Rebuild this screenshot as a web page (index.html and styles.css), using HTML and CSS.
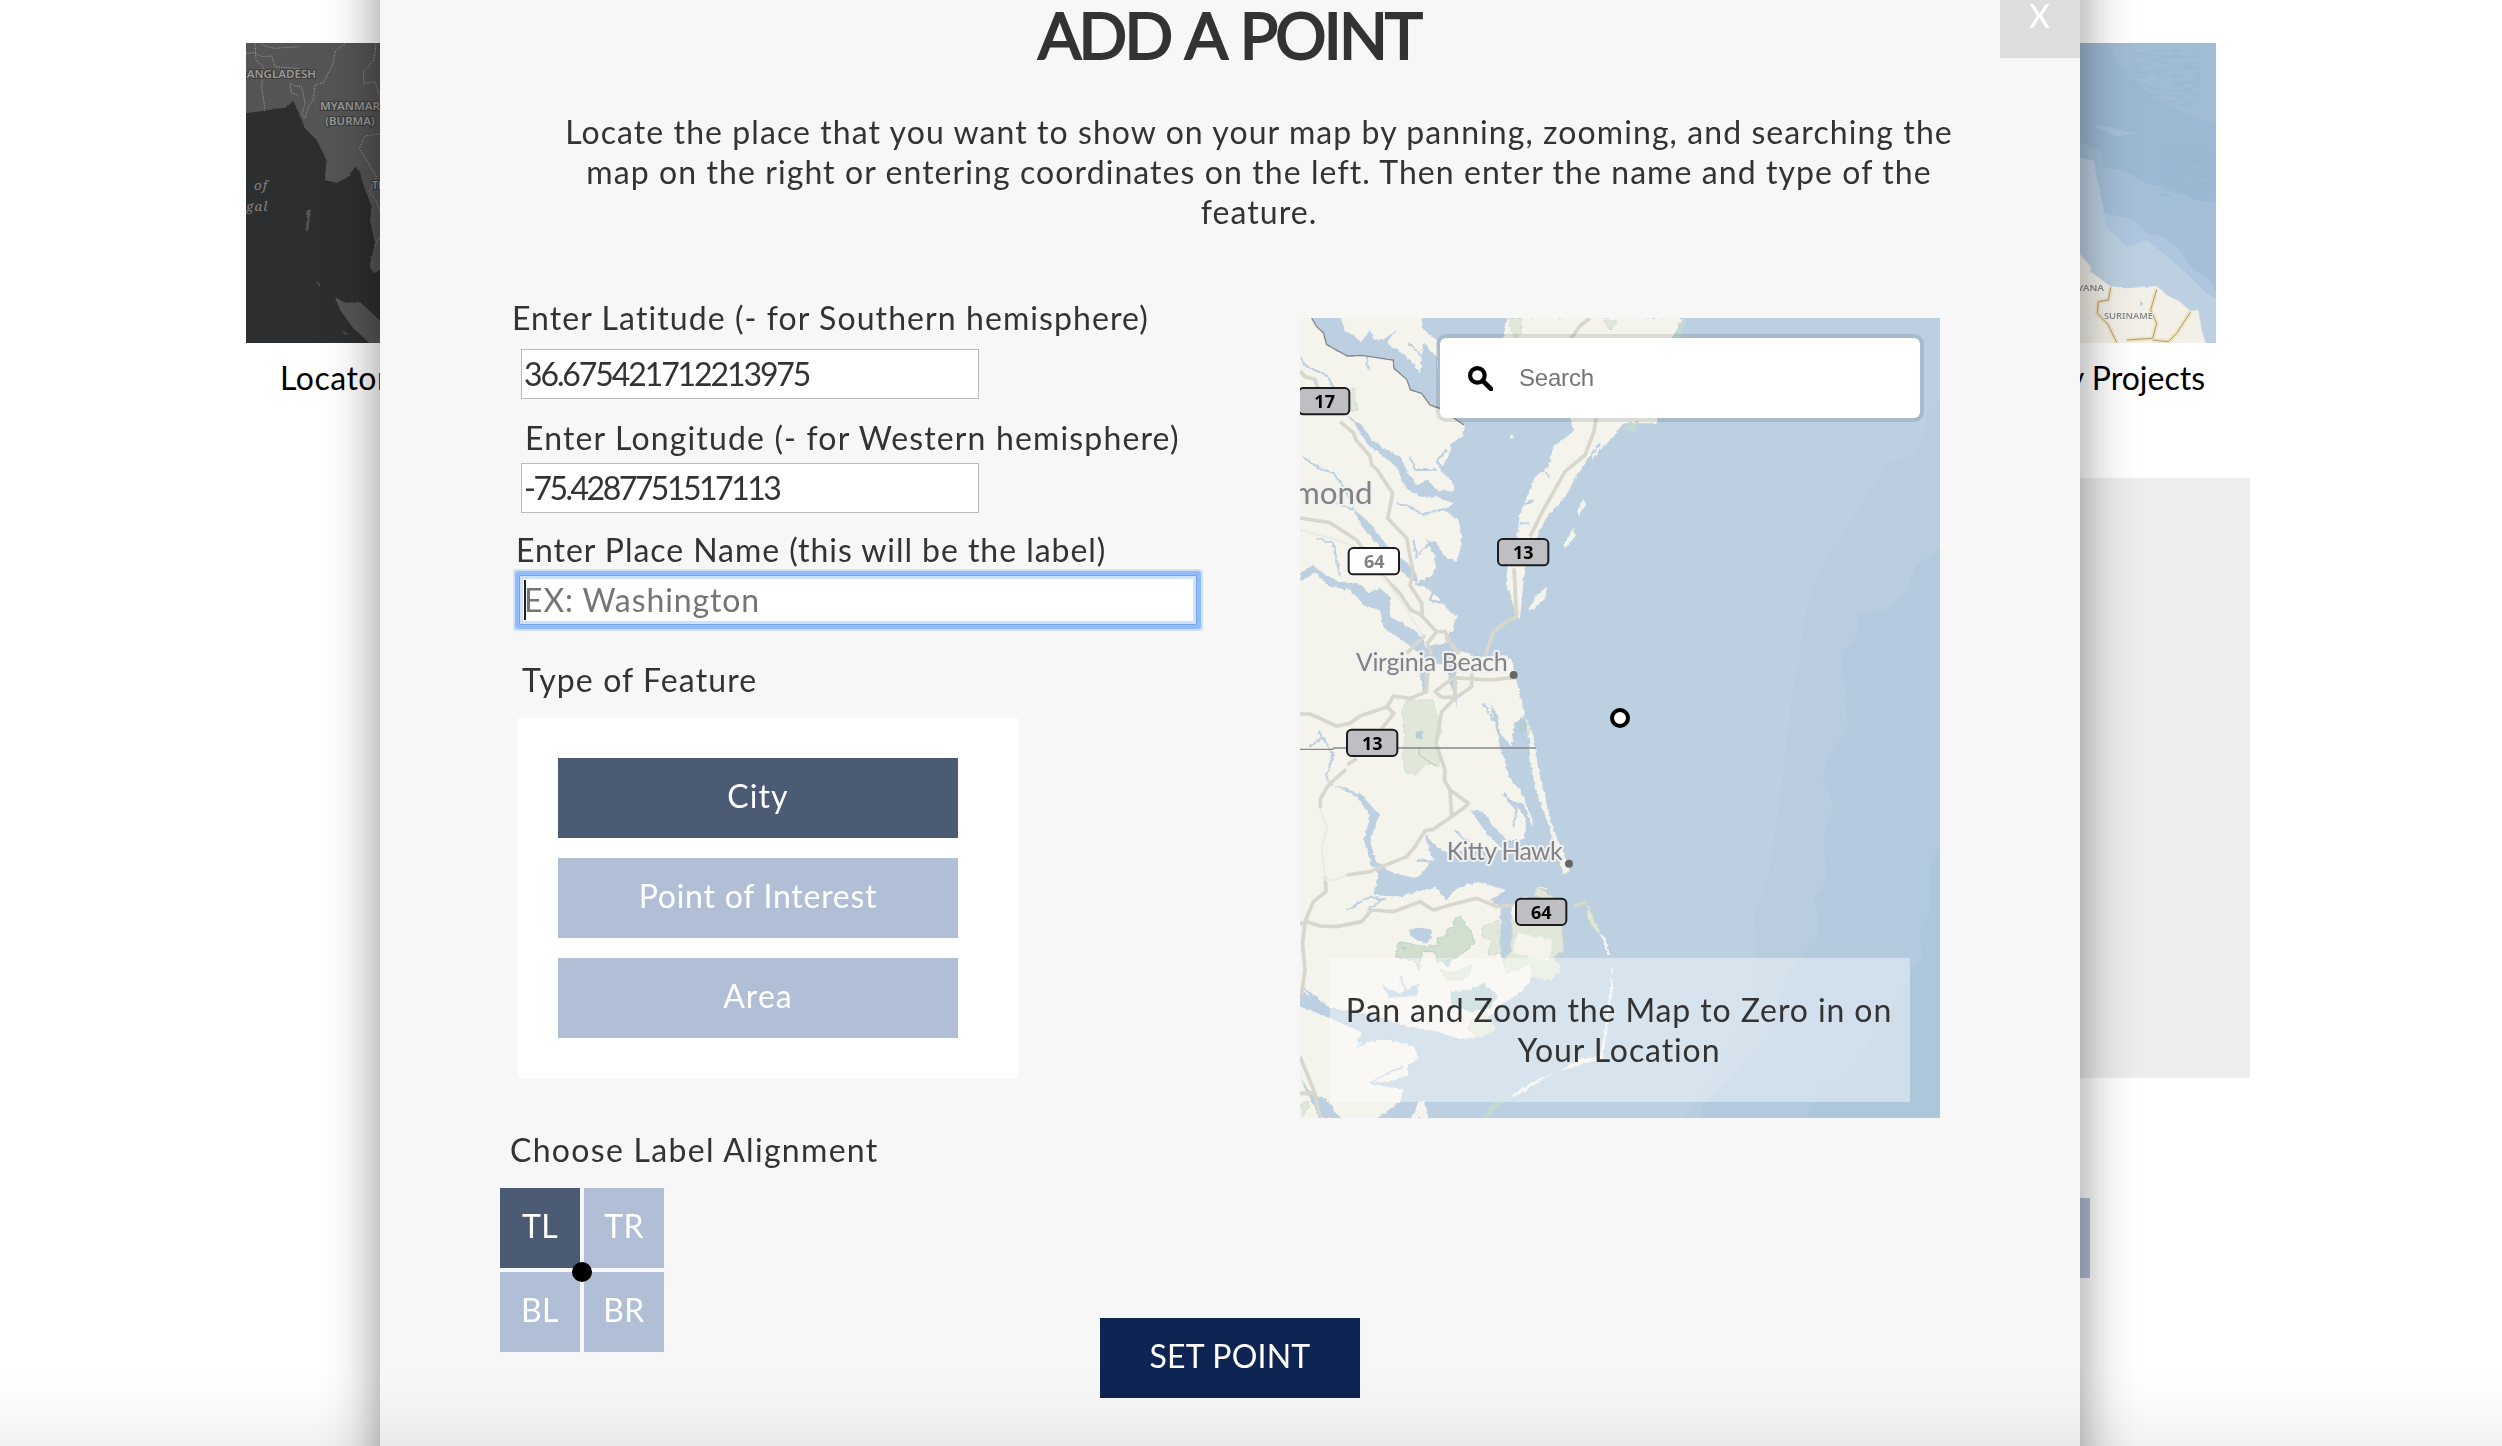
FILE: index.html
```html
<!DOCTYPE html>
<html lang="en">
<head>
<meta charset="utf-8">
<title>Add a Point</title>
<link rel="stylesheet" href="styles.css">
</head>
<body>
<div class="page">
  <div class="gallery">
    <figure class="card">
      <svg class="thumb" viewBox="78 129 1200 900">
        <rect x="78" y="129" width="1200" height="900" fill="#2d2e30"/>
        <g filter="url(#rough)" fill="#555">
          <path d="M60 100H600V960L480 810L462 820L448 800L465 730L450 660L455 620L432 560L420 515L405 500L385 530L350 548L314 540L320 480L290 420L255 385L235 335L220 302L200 322L78 340Z"/>
          <path d="M345 892L375 908L420 906L500 980V1040H460L400 985L360 930Z"/>
          <path d="M262 630L272 628L265 690L258 695ZM362 990L390 1005L375 1003ZM290 842L302 855L296 858Z"/>
        </g>
        <g fill="none" stroke="#a3a3a3" stroke-width="3" stroke-dasharray="3 4">
          <path d="M78 160L105 158L125 170L155 168L165 200L240 206M130 135L160 145L240 140M105 130L108 180L130 200L125 260L136 335"/>
          <path d="M375 130L345 155L340 190L310 248L285 255L280 300L265 320L255 355L246 345L255 310L245 260L225 258L210 250L215 280L232 285"/>
          <path d="M468 130L462 180L430 215L432 250L465 245L478 285M478 402L435 408L418 445L445 490L470 530L448 575L470 605L482 640M480 712L462 740"/>
        </g>
        <g class="dark-names">
          <text x="80" y="234" textLength="208" lengthAdjust="spacingAndGlyphs">ANGLADESH</text>
          <text x="300" y="330" textLength="180" lengthAdjust="spacingAndGlyphs">MYANMAR</text>
          <text x="316" y="376" textLength="148" lengthAdjust="spacingAndGlyphs">(BURMA)</text>
          <text x="456" y="566">THAI</text>
        </g>
        <g class="dark-sea"><text x="102" y="571">of</text><text x="78" y="632">gal</text></g>
      </svg>
      <figcaption class="caption caption-left">Locator</figcaption>
    </figure>
    <figure class="card">
      <svg class="thumb" viewBox="-432 129 1200 900">
        <defs>
          <filter id="rough" x="-5%" y="-5%" width="110%" height="110%">
            <feTurbulence type="fractalNoise" baseFrequency=".09" numOctaves="3" seed="4"/>
            <feDisplacementMap in="SourceGraphic" scale="7"/>
          </filter>
          <filter id="streaks" x="0" y="0" width="100%" height="100%" color-interpolation-filters="sRGB">
            <feTurbulence type="fractalNoise" baseFrequency=".03 .09" numOctaves="3" seed="8"/>
            <feColorMatrix values="0 0 0 0 .59  0 0 0 0 .71  0 0 0 0 .82  12 0 0 0 -6"/>
          </filter>
        </defs>
        <rect x="-432" y="129" width="1200" height="900" fill="#9cb9d3"/>
        <g filter="url(#rough)">
          <path d="M440 120H790V380L700 350L600 300L540 260L480 200Z" fill="#a3bdd6" opacity=".8"/>
          <path d="M340 420L420 450L430 500L500 515L560 550L650 570L700 600L790 610V1040H300Z" fill="#a5bfd8"/>
          <path d="M340 600L440 640L520 660L560 700L610 710L660 750L700 810L740 830L790 900V1040H300Z" fill="#afc7de"/>
          <path d="M340 470L400 480L425 600L440 680L500 740L560 720L610 760L680 820L740 880L790 910V1040H300Z" fill="#bcd0e1"/>
          <path d="M385 372L440 380L525 400L470 410Z" fill="#a7c1d9"/>
          <path d="M-440 600L340 745L365 768L392 800V815L450 858L500 865L590 858L620 885L660 905L690 932L715 930L725 990L738 1035H-440Z" fill="#f2f0e9"/>
        </g>
        <rect x="520" y="150" width="200" height="170" filter="url(#streaks)" opacity=".45"/>
        <rect x="600" y="440" width="160" height="150" filter="url(#streaks)" opacity=".45"/>
        <g fill="none" stroke="#f3e3bb" stroke-width="14"><path d="M452 862L445 900L415 905L412 940L445 975L470 1028M590 868L572 930L590 970L578 1015L500 1020M692 935L650 1000L625 1025L578 1020"/></g>
        <g fill="none" stroke="#a09c90" stroke-width="3"><path d="M452 862L445 900L415 905L412 940L445 975L470 1028M590 868L572 930L590 970L578 1015L500 1020M692 935L650 1000L625 1025L578 1020"/></g>
        <path d="M541 902L550 911L541 920Z" fill="#afcbe3"/>
        <g class="light-names"><text x="330" y="873" textLength="102" lengthAdjust="spacingAndGlyphs">UYANA</text><text x="432" y="958" textLength="147" lengthAdjust="spacingAndGlyphs">SURINAME</text></g>
      </svg>
      <figcaption class="caption caption-right">My Projects</figcaption>
    </figure>
  </div>
  <div class="preview"></div>
  <button class="next"></button>
</div>

<main class="modal">
  <button class="close">X</button>
  <h1 class="title">ADD A POINT</h1>
  <p class="intro">Locate the place that you want to show on your map by panning, zooming, and searching the<br>map on the right or entering coordinates on the left. Then enter the name and type of the<br>feature.</p>
  <div class="columns">
    <form class="fields">
      <label class="label lat-label">Enter Latitude (- for Southern hemisphere)</label>
      <input class="coord lat" value="36.675421712213975">
      <label class="label lon-label">Enter Longitude (- for Western hemisphere)</label>
      <input class="coord lon" value="-75.4287751517113">
      <label class="label name-label">Enter Place Name (this will be the label)</label>
      <div class="name-wrap"><input class="name" placeholder="EX: Washington"><i class="caret"></i></div>
      <label class="label type-label">Type of Feature</label>
      <div class="types">
        <div class="choice selected">City</div>
        <div class="choice poi">Point of Interest</div>
        <div class="choice">Area</div>
      </div>
      <label class="label align-label">Choose Label Alignment</label>
      <div class="align">
        <div class="choice selected">TL</div>
        <div class="choice">TR</div>
        <div class="choice">BL</div>
        <div class="choice">BR</div>
        <i class="dot"></i>
      </div>
    </form>
    <div class="map">
      <svg class="map-art" viewBox="30 24 1920 2400">
        <defs>
          <filter id="coast" x="-2%" y="-2%" width="104%" height="104%">
            <feTurbulence type="fractalNoise" baseFrequency=".07" numOctaves="4" seed="11"/>
            <feDisplacementMap in="SourceGraphic" scale="12" xChannelSelector="R" yChannelSelector="G"/>
          </filter>
        </defs>
        <rect x="30" y="24" width="1920" height="2400" fill="#bcd0e1"/>
        <path fill="#b9cddf" d="M1950 262L1915 310L1895 400L1870 432L1795 462L1690 620L1610 745L1550 880L1530 1030L1502 1190L1465 1500L1432 1715L1393 1800L1400 2050L1260 2310L1180 2424H1950Z"/>
        <path fill="#b2c9de" d="M1950 712L1875 772L1850 848L1795 897L1710 912L1698 980L1680 1010L1658 1022V1060L1674 1250L1610 1355L1598 1415L1625 1465V1505L1602 1575L1608 1715L1572 1762L1587 1815L1585 1880L1530 1945L1490 2000L1430 2180L1280 2345L1238 2392L1230 2424H1950Z"/>
        <path fill="#acc7da" d="M1950 1602L1920 1670V1810L1890 1865L1895 1945L1830 2040L1730 2210L1680 2300L1620 2313L1595 2330L1547 2424H1950Z"/>
        <g filter="url(#coast)">
          <g fill="#f4f3ec">
            <!-- western shore down to the Outer Banks -->
            <path d="M0 0H390L400 60L440 90L450 280L522 345L515 380L485 400L475 440L450 480L490 520V580L465 600L505 630L514 665V705L500 755L465 740L440 700L405 685L432 730L440 770L420 800L385 815L440 860L465 890L500 920L490 960L465 975L505 1020L560 1040L640 1035L665 1050L676 1100L690 1150L705 1220L730 1275L742 1360L762 1450L785 1540L815 1620L842 1680L820 1692L808 1650L775 1570L735 1520L715 1600L790 1660L810 1690L770 1740L740 1730L690 1745L815 1840L822 1925L785 1925L812 1980L780 2012L728 2000L700 2040L640 2080L600 2120L570 2180L500 2190L440 2165L340 2160L200 2110L120 2100L60 2060L0 2020Z"/>
            <path d="M0 2080L60 2100L120 2125L215 2165L200 2200L290 2190L372 2205L385 2245L350 2270L355 2295L300 2315L235 2320L340 2340L330 2375L255 2430H0ZM385 2375L405 2372L415 2424H365Z"/>
            <!-- Delmarva -->
            <path d="M500 24H1180L1145 84L1100 340L1000 340L950 390L900 440L870 490L840 540L800 590L755 650L715 740L702 800L690 925H678L668 870L648 820L652 770L680 690L690 610L715 550L735 500L775 470L790 410L850 365L840 320L560 90Z"/>
            <path d="M930 340L995 345L970 380L930 420L905 450ZM880 570L888 585L865 620L862 600ZM850 655L855 680L825 715L820 705ZM770 830L765 870L715 905L735 860ZM810 745L795 765ZM660 370L672 378L662 392Z"/>
          </g>
          <g fill="#bcd0e1">
            <path d="M65 20H150L165 60L215 95L240 60L250 90L285 85L320 60L290 100L330 125L360 150L390 190L400 100L440 140L455 300L420 285L395 250L362 240L350 208L312 175L310 150L215 136L172 138L110 104L100 68L80 50Z"/>
            <path d="M430 20H650L640 90H560L450 90Z"/>
            <path d="M170 312L215 345L245 390L300 425L330 440L355 490L380 525L415 510L440 540L500 545V585L440 560L390 560L345 530L320 470L275 435L235 405L205 360Z"/>
            <path d="M190 595L240 640L290 705L370 775L385 820L350 800L270 710L215 650Z"/>
            <path d="M30 790L70 765L110 795L145 815L215 825L235 850L270 835L300 860L300 920L380 965L410 1010L470 1000L465 980L505 1020L500 1080L450 1065L410 1050L350 1000L280 950L270 900L220 885L180 840L120 830L75 790L30 815Z"/>
            <path d="M385 1060L420 1075L412 1150H400ZM470 1060L500 1085V1190L485 1140Z"/>
            <!-- Currituck Sound -->
            <path d="M600 1180L620 1210L630 1270L665 1310L672 1240L700 1230L718 1290L720 1340L735 1430L770 1530L792 1600L812 1650L795 1655L750 1590L720 1510L690 1440L655 1400L645 1350L630 1310L615 1240Z"/>
            <path d="M400 1570L445 1615L470 1625L640 1620L590 1570L540 1500L580 1505L620 1560L650 1590L700 1590L710 1530L690 1500L650 1470L700 1480L735 1570L810 1650V1690L830 1745L890 1775L925 1870L820 1860L810 1740L745 1730L690 1770L665 1790V1920L640 1960L630 1930L632 1790L600 1770L650 1740L560 1715L500 1735L470 1770L435 1730L380 1745L330 1760L250 1755L265 1700L250 1650L310 1690L380 1705L430 1650Z"/>
            <path d="M125 1422L210 1450L268 1515L240 1590L262 1670H245L222 1590L240 1515L200 1460Z"/>
            <path d="M30 2025L70 2055L120 2095L230 2110L360 2150L440 2165L520 2190V2240L370 2210L240 2160L120 2115L80 2085Z"/>
            <path d="M30 2305L70 2355L110 2370L150 2424H90L60 2365Z"/>
            <path d="M275 2025L330 2050L390 2015L380 2055L300 2065Z"/>
          </g>
          <g fill="none" stroke="#bcd0e1" stroke-width="6">
            <path d="M30 145L50 170L110 195L130 230L170 300M40 440L70 465L130 490L160 530L190 590M130 575L190 600M320 580L360 590L400 615L450 600L490 590M360 440L375 480L440 480M470 420L440 455L480 500M370 690L380 740L420 700M375 825L440 825L420 870L465 880M80 685L130 700L150 800M150 120L190 140M230 140L235 180M355 100L400 140M730 570L690 590M840 370L790 370M720 640L690 640M760 640L830 560L860 500L930 400M740 470L780 500"/>
            <path d="M85 1265L130 1330L110 1400L125 1430M495 1560L520 1585L545 1600M640 1450L680 1500L670 1550M580 1180L625 1250M380 1650L420 1655L410 1690M170 1800L240 1760L280 1770L230 1800M200 2210L260 2180M240 2320L290 2290L340 2270M330 2000L350 2050M60 1310L100 1280"/>
          </g>
        </g>
        <g filter="url(#coast)">
          <g fill="#e1e8d9" stroke="#c9d8c8" stroke-width="2">
            <path d="M350 1170H430L440 1210L455 1260L440 1290L450 1365L410 1360L375 1395L345 1385L338 1340L345 1270L335 1200Z"/>
            <path d="M665 1830L815 1850L820 1925L790 1940L810 1985L775 2010L725 1995L720 1960L650 1990L640 1960L665 1920Z"/>
            <path d="M580 1850L625 1830L632 1930L595 1935L605 1890L575 1880Z"/>
            <path d="M740 1730L790 1760L785 1780L735 1755ZM890 1778L928 1865L920 1870L895 1825ZM700 1230L722 1250L715 1280Z"/>
            <path d="M450 1975L480 1990L545 1965L535 1995L510 2010H470ZM530 2150L580 2100L610 2140L620 2160L570 2185ZM655 24H695L690 75L670 85Z"/>
            <path d="M180 240L195 235V270L205 300L185 305ZM30 2385L60 2375L40 2420ZM940 30L980 35L960 60Z"/>
          </g>
          <path fill="#d1dfcf" stroke="#bdd2c0" stroke-width="3" d="M315 1940L330 1895L405 1910L445 1905L440 1885L475 1875L465 1860L490 1850L495 1825L510 1820L545 1870L555 1900L500 1945L440 1955L435 1925L395 1925L388 1980L370 1950Z"/>
          <path fill="#bcd0e1" d="M358 1860L385 1853L425 1858V1885L400 1900L365 1880Z"/>
          <path fill="#b5cfd4" d="M478 2045L540 2040L580 2020L625 2055L600 2095L540 2105L485 2085ZM450 1950H480L475 1975ZM328 1905L350 1912L345 1925ZM675 1240L705 1220L712 1265L690 1270ZM375 1265H398V1285H378Z"/>
          <path fill="#f4f3ec" d="M682 1868L788 1890L778 1952L668 1930ZM930 1870L945 1880L960 1935H952ZM963 1975H968V1995H963ZM965 2000L970 2020L945 2200L938 2250L930 2240L950 2120ZM810 2285L860 2250L940 2235V2250L880 2260ZM660 2365L700 2330L795 2285L700 2345Z"/>
          <path fill="#c5d9d4" d="M575 2424L610 2375L640 2372L590 2424ZM1175 24H1190L1168 84H1150ZM1000 350L1050 330L1030 370Z"/>
        </g>
        <g class="roads">
          <path d="M30 183L45 200L75 208L85 240M150 335L190 368L198 390L240 438L245 465L262 480L308 550L293 625L350 685L370 790L360 825L395 880L398 925"/>
          <path d="M30 624L120 638L200 690L280 800L330 850L362 900L390 912L440 965H465L490 1015L510 1030M440 965L412 1000L425 1035M405 975L350 1030" />
          <path d="M900 24L870 48L840 90M918 325L912 365L885 435L825 485L760 600L720 680M672 775L680 920L650 935L610 965L585 1040"/>
          <path d="M410 1085V1145L360 1165L310 1158L292 1190L210 1218L180 1240L140 1248L60 1212H30M290 1190L312 1210L275 1255M200 1345L172 1365M168 1378L115 1425L92 1465L90 1495M670 1103L600 1110L490 1103L435 1145L455 1162H500L545 1130V1090M495 1103V1165L455 1205L438 1300L465 1380L463 1410L480 1440L485 1520L430 1558L405 1562L375 1610L350 1640L240 1685L170 1695M480 1440L535 1480L520 1495L485 1520"/>
          <path d="M105 1700L108 1745L70 1775L45 1835L38 1900L45 1980L35 2055M50 1835L90 1848L140 1850L215 1835L245 1800L310 1805L390 1775L430 1800L480 1785L560 1765L620 1790L670 1785M850 1790L890 1777M30 2240L75 2350L90 2420M30 2350H75M30 1840H45"/>
        </g>
        <path class="minor" d="M90 1500L112 1550L95 1610L105 1710L130 1712L170 1695M30 660L140 690L220 720L330 870L400 980"/>
        <path class="border" d="M30 1318H128L132 1314H738M65 24L80 50L100 68L110 104L172 138L215 136L310 150L312 175L350 208L362 240L395 250L420 285L450 295L522 345"/>
        <path d="M388 1317V1335L440 1370" fill="none" stroke="#b6c6ae" stroke-width="3"/>
        <g class="places">
          <text x="12" y="583" font-size="90" textLength="236" lengthAdjust="spacingAndGlyphs">mond</text>
          <text x="198" y="1083" font-size="75" textLength="455">Virginia Beach</text>
          <text x="470" y="1650" font-size="75" textLength="348">Kitty Hawk</text>
        </g>
        <circle cx="671" cy="1095" r="12" fill="#666"/><circle cx="837" cy="1661" r="12" fill="#666"/>
        <g class="shields">
          <rect x="26" y="234" width="152" height="79" rx="14"/><rect x="624" y="687" width="151" height="79" rx="14"/><rect x="171" y="1259" width="151" height="79" rx="14"/><rect x="678" y="1766" width="151" height="79" rx="14"/>
          <rect x="176" y="714" width="151" height="79" rx="14" fill="#fff"/>
        </g>
        <g class="shield-text">
          <text x="104" y="293">17</text><text x="700" y="746">13</text><text x="247" y="1320">13</text><text x="754" y="1826">64</text><text x="253" y="773" fill="#808080">64</text>
        </g>
        <circle cx="990" cy="1224" r="24" fill="#fff" stroke="#000" stroke-width="12"/>
      </svg>
      <div class="search">
        <svg class="glass" viewBox="0 0 24 24"><circle cx="9" cy="9" r="7" fill="none" stroke="#000" stroke-width="4"/><path d="M14.5 14.5L22 22" stroke="#000" stroke-width="4.6" stroke-linecap="round"/></svg>
        <span>Search</span>
      </div>
      <div class="hint">Pan and Zoom the Map to Zero in on<br>Your Location</div>
    </div>
  </div>
  <button class="submit">SET POINT</button>
</main>
<div class="fade"></div>
</body>
</html>
```
FILE: styles.css
```css
* { box-sizing: border-box; }
body {
  margin: 0;
  height: 1446px;
  overflow: hidden;
  position: relative;
  background: #fff;
  color: #333;
  font: 32px/40px Lato, "Noto Sans", sans-serif;
  letter-spacing: 1.08px;
}
button { border: 0; font: inherit; letter-spacing: inherit; padding: 0; }

/* page behind the dialog */
.page { display: flex; flex-direction: column; padding: 43px 0 0 246px; }
.gallery { display: flex; justify-content: space-between; width: 1970px; }
.card { margin: 0; width: 400px; }
.thumb { display: block; width: 400px; height: 300px; }
.caption { color: #000; padding-top: 15px; }
.caption-left { padding-left: 34px; letter-spacing: .5px; }
.caption-right { text-align: right; padding-right: 11px; letter-spacing: 0; }
.preview { width: 1400px; height: 600px; margin: 80px 0 0 604px; background: #ededed; }
.next { width: 400px; height: 80px; margin: 120px 0 0 1444px; background: #b1bfd6; }
.dark-names { font: 600 32px "Noto Sans", sans-serif; letter-spacing: 0; fill: #999; stroke: #3c3c3c; stroke-width: 6px; paint-order: stroke; }
.dark-sea { font: italic 40px "Noto Serif", "Liberation Serif", serif; letter-spacing: 3px; fill: #858585; }
.light-names { font: 600 29px "Noto Sans", sans-serif; letter-spacing: 0; fill: #8a8a8a; stroke: #f2f0e9; stroke-width: 4px; paint-order: stroke; }

/* dialog, running past the top and bottom of the window */
.modal {
  position: absolute;
  top: -100px;
  left: 380px;
  width: 1700px;
  height: 1646px;
  padding-top: 100px;
  background: #f7f7f7;
  box-shadow: 0 0 50px rgba(0, 0, 0, .44);
  display: flex;
  flex-direction: column;
}
.close { position: absolute; top: 78px; right: 0; width: 80px; height: 80px; padding: 0 0 4px; background: #ddd; color: #fff; text-align: center; }
.title { margin: 0 0 0 -2px; font-size: 64px; font-weight: 400; line-height: 69px; letter-spacing: -2.8px; word-spacing: 3px; text-align: center; -webkit-text-stroke: 2px #333; }
.intro { margin: 43px 0 0; padding-left: 58px; text-align: center; white-space: nowrap; }
.columns { display: grid; grid-template-columns: 800px 640px; margin: 66px 0 0 120px; align-items: start; }
.fields { display: flex; flex-direction: column; align-items: flex-start; }
.label { white-space: nowrap; }
.lat-label { padding-left: 12px; }
.lon-label { padding-left: 25px; margin-top: 19px; letter-spacing: 1.15px; }
.name-label { padding-left: 16px; margin-top: 17px; letter-spacing: .95px; }
.type-label { padding-left: 22px; margin-top: 35px; letter-spacing: 1.1px; }
.align-label { padding-left: 10px; margin-top: 52px; letter-spacing: 1.3px; }
.coord, .name { height: 50px; border: 1px solid #bbb; padding: 0 2px 1px; background: #fff; color: #333; font: inherit; outline: 0; }
.coord { width: 458px; margin-left: 21px; }
.lat { margin-top: 11px; letter-spacing: -2.1px; }
.lon { margin-top: 5px; letter-spacing: -2.5px; }
.name-wrap { position: relative; margin: 5px 0 0 19px; }
.name { display: block; width: 678px; padding-left: 4px; border: 1px solid #74a5e8; letter-spacing: .9px; box-shadow: inset 0 0 0 3px #d0e2fb, 0 0 0 4px #92bcf7, 0 0 0 6px #cfe0f8; border-radius: 1px; }
.name::placeholder { color: #757575; opacity: 1; }
.caret { position: absolute; left: 5px; top: 5px; width: 2px; height: 40px; background: #222; }
.types { width: 500px; height: 360px; margin: 18px 0 0 18px; padding: 40px; background: #fff; display: flex; flex-direction: column; gap: 20px; }
.types .choice { width: 400px; }
.choice { height: 80px; line-height: 76px; background: #b1bfd6; color: #fff; text-align: center; }
.poi { letter-spacing: .75px; }
.selected { background: #4c5b74; }
.align { position: relative; display: grid; grid-template-columns: 80px 80px; gap: 4px; margin-top: 18px; }
.align .choice { letter-spacing: .4px; }
.dot { position: absolute; left: 72px; top: 74px; width: 20px; height: 20px; border-radius: 50%; background: #000; }
.submit { align-self: center; width: 260px; height: 80px; margin-top: -34px; padding-bottom: 4px; background: #0e2554; color: #fff; letter-spacing: .2px; }

/* map */
.map { position: relative; width: 640px; height: 800px; margin-top: 20px; overflow: hidden; }
.map-art { display: block; width: 640px; height: 800px; letter-spacing: 0; }
.roads { fill: none; stroke: #d8d7cd; stroke-width: 11; stroke-linejoin: round; }
.minor { fill: none; stroke: #ebeae6; stroke-width: 6; }
.border { fill: none; stroke: #86878a; stroke-width: 4; }
.places { font-family: Lato, sans-serif; fill: #828286; stroke: #f0f1ef; stroke-width: 12px; stroke-linejoin: round; paint-order: stroke; }
.shields { fill: #bebfc2; stroke: #1c1c1e; stroke-width: 6; }
.shield-text { font: 700 54px "Noto Sans", sans-serif; text-anchor: middle; }
.search { position: absolute; left: 136px; top: 16px; width: 488px; height: 88px; border: 4px solid rgba(0, 0, 0, .1); border-radius: 10px; background: #fff; background-clip: padding-box; display: flex; align-items: center; gap: 26px; padding-left: 28px; color: #757575; font: 24px "Liberation Sans", Arial, sans-serif; letter-spacing: -.2px; }
.glass { width: 25px; height: 25px; }
.hint { position: absolute; left: 30px; top: 640px; width: 580px; height: 144px; padding: 32px 2px 0 0; background: rgba(255, 255, 255, .42); text-align: center; letter-spacing: .9px; white-space: nowrap; }
.fade { position: absolute; left: 0; right: 0; bottom: 0; height: 76px; background: linear-gradient(rgba(0, 0, 0, 0), rgba(0, 0, 0, .015) 45%, rgba(0, 0, 0, .055)); }
```
